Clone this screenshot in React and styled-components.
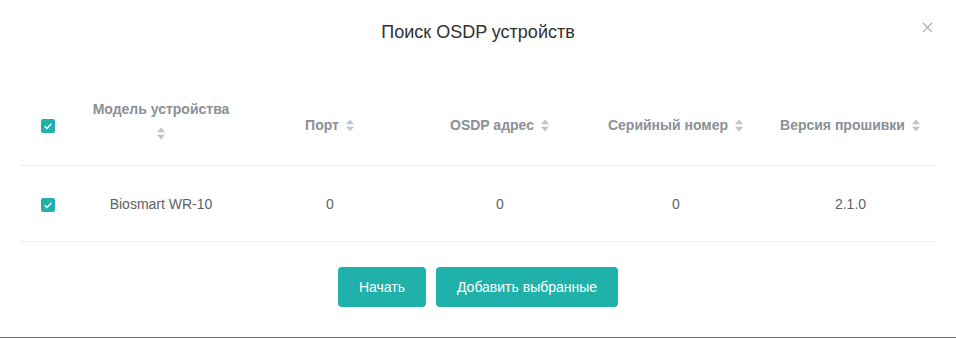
import React from "react";
import styled, { createGlobalStyle } from "styled-components";

const GlobalStyle = createGlobalStyle`
  html, body {
    margin: 0;
    padding: 0;
    background: #ffffff;
    font-family: "Liberation Sans", Arial, sans-serif;
  }
`;

const accent = "#20b2aa";

const columns = [
  { key: "model", title: "Модель устройства", width: 172, wrap: true },
  { key: "port", title: "Порт", width: 166 },
  { key: "address", title: "OSDP адрес", width: 174 },
  { key: "serial", title: "Серийный номер", width: 178 },
  { key: "firmware", title: "Версия прошивки", width: 171 },
];

const rows = [
  { model: "Biosmart WR-10", port: "0", address: "0", serial: "0", firmware: "2.1.0" },
];

const SortIcon = () => (
  <StyledSort viewBox="0 0 10 13" width="10" height="13">
    <path d="M5 0.5 L9 5.3 L1 5.3 Z" fill="#c0c4cc" />
    <path d="M5 12.5 L9 7.7 L1 7.7 Z" fill="#c0c4cc" />
  </StyledSort>
);

const Checkbox = () => (
  <StyledCheckbox>
    <svg viewBox="0 0 14 14" width="14" height="14">
      <path d="M3.6 7.2 L6 9.4 L10.4 4.8" stroke="#fff" strokeWidth="1.4" fill="none" />
    </svg>
  </StyledCheckbox>
);

const App = () => {
  return (
    <>
      <GlobalStyle />
      <StyledModal>
        <StyledHeader>
          <StyledTitle>Поиск OSDP устройств</StyledTitle>
          <StyledClose aria-label="close">
            <svg viewBox="0 0 12 12" width="11" height="11">
              <path d="M1 1 L11 11 M11 1 L1 11" stroke="#a0a0a0" strokeWidth="1.1" />
            </svg>
          </StyledClose>
        </StyledHeader>
        <StyledTable>
          <colgroup>
            <col style={{ width: 55 }} />
            {columns.map((c) => (
              <col key={c.key} style={{ width: c.width }} />
            ))}
          </colgroup>
          <thead>
            <tr>
              <StyledTh>
                <Checkbox />
              </StyledTh>
              {columns.map((c) => (
                <StyledTh key={c.key}>
                  <StyledHeadLabel $wrap={c.wrap}>
                    <span>{c.title}</span>
                    <SortIcon />
                  </StyledHeadLabel>
                </StyledTh>
              ))}
            </tr>
          </thead>
          <tbody>
            {rows.map((r) => (
              <tr key={r.model}>
                <StyledTd>
                  <Checkbox />
                </StyledTd>
                {columns.map((c) => (
                  <StyledTd key={c.key}>{r[c.key]}</StyledTd>
                ))}
              </tr>
            ))}
          </tbody>
        </StyledTable>
        <StyledFooter>
          <StyledButton>Начать</StyledButton>
          <StyledButton>Добавить выбранные</StyledButton>
        </StyledFooter>
      </StyledModal>
    </>
  );
};

const StyledModal = styled.div`
  box-sizing: border-box;
  width: 956px;
  height: 338px;
  background: #fff;
  border-bottom: 1px solid #6b6b6b;
  padding: 0 20px;
  display: flex;
  flex-direction: column;
`;

const StyledHeader = styled.div`
  position: relative;
  height: 85px;
  display: flex;
  justify-content: center;
  padding-top: 21px;
  box-sizing: border-box;
`;

const StyledTitle = styled.h2`
  margin: 0;
  font-size: 18px;
  font-weight: 400;
  line-height: 22px;
  color: #303133;
`;

const StyledClose = styled.button`
  position: absolute;
  top: 22px;
  right: 3px;
  border: 0;
  background: none;
  padding: 0;
  width: 11px;
  height: 11px;
  display: flex;
`;

const StyledTable = styled.table`
  width: 100%;
  border-collapse: collapse;
  table-layout: fixed;
`;

const StyledTh = styled.th`
  height: 80px;
  padding: 0 4px;
  border-bottom: 1px solid #ebeef5;
  text-align: center;
  vertical-align: middle;
  font-size: 14px;
  font-weight: 700;
  color: #8c8f96;
  &:first-child {
    padding: 0;
  }
`;

const StyledHeadLabel = styled.div`
  display: flex;
  flex-direction: ${(p) => (p.$wrap ? "column" : "row")};
  align-items: center;
  justify-content: center;
  gap: ${(p) => (p.$wrap ? "10px" : "6px")};
  margin-top: ${(p) => (p.$wrap ? "-10px" : "0")};
  line-height: 16px;
`;

const StyledSort = styled.svg`
  display: block;
  flex-shrink: 0;
`;

const StyledTd = styled.td`
  height: 75px;
  padding: 0 4px;
  border-bottom: 1px solid #ebeef5;
  text-align: center;
  vertical-align: middle;
  font-size: 14px;
  color: #606266;
  &:first-child {
    padding: 0;
  }
`;

const StyledCheckbox = styled.span`
  display: inline-flex;
  width: 14px;
  height: 14px;
  border-radius: 2px;
  background: ${accent};
  vertical-align: middle;
`;

const StyledFooter = styled.div`
  display: flex;
  justify-content: center;
  gap: 10px;
  padding-top: 25px;
`;

const StyledButton = styled.button`
  height: 40px;
  padding: 0 21px;
  border: 0;
  border-radius: 4px;
  background: ${accent};
  color: #fff;
  font-family: "Liberation Sans", Arial, sans-serif;
  font-size: 14px;
  cursor: pointer;
`;

export default App;
